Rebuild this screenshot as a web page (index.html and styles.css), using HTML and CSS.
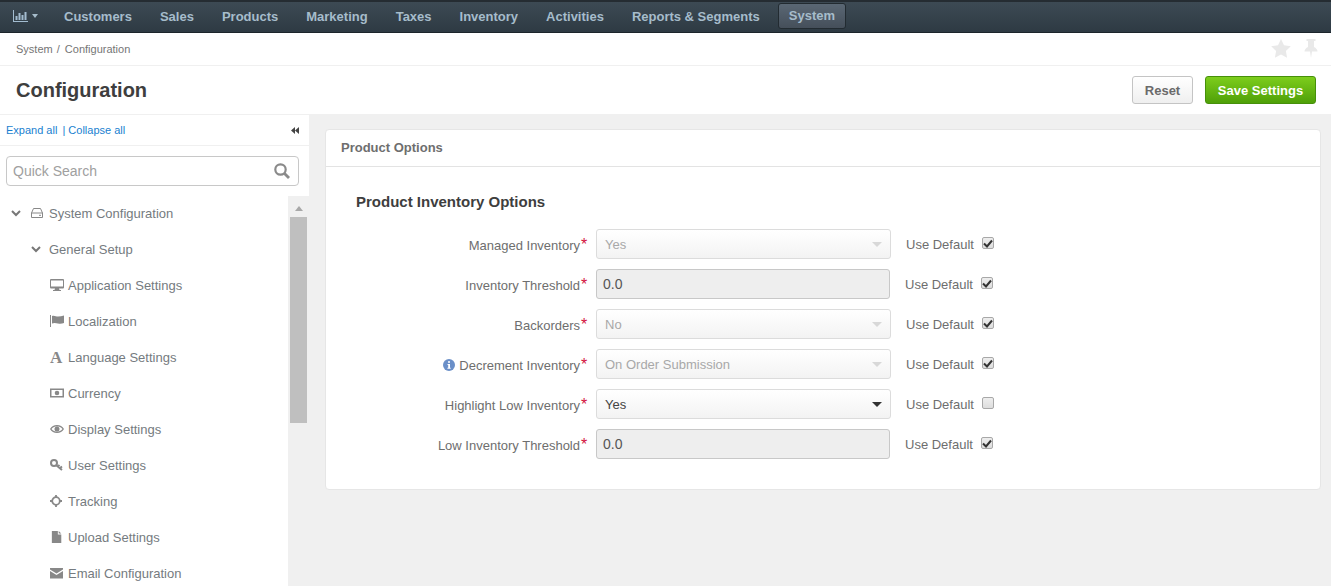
FILE: index.html
```html
<!DOCTYPE html>
<html>
<head>
    <meta charset="utf-8" />
    <title>Configuration</title>
    <link rel="stylesheet" href="styles.css">
</head>
<body>

<div class="topnav">
    <span class="nav-chart">
        <svg width="15" height="12" viewBox="0 0 15 12"><path d="M0 0h1v11h14v1H0z M2.500 6h2v4h-2z M5.500 3h2v7h-2z M8.500 5h2v5h-2z M11.500 2h2v8h-2z" fill="#a3bcd0"/></svg>
        <i class="nav-caret"></i>
    </span>
    <a>Customers</a>
    <a>Sales</a>
    <a>Products</a>
    <a>Marketing</a>
    <a>Taxes</a>
    <a>Inventory</a>
    <a>Activities</a>
    <a>Reports &amp; Segments</a>
    <a class="current">System</a>
</div>

<div class="crumbs">
    <span>System <span class="crumb-sep">/</span> Configuration</span>
    <span class="crumb-icons">
        <svg width="20" height="19" viewBox="0 0 20 19"><path d="M10 0l3 6.200 6.800 1-4.900 4.700 1.200 6.800L10 15.500l-6.100 3.200 1.200-6.800L.2 7.200l6.800-1z" fill="#e9e9e9"/></svg>
        <svg width="14" height="19" viewBox="0 0 14 19"><path d="M2.500 0h9v2H10v6c2 1 3.500 2.500 3.500 4.500H8L7 19l-1-6.500H.5C.5 10.500 2 9 4 8V2H2.500z" fill="#e9e9e9"/></svg>
    </span>
</div>

<div class="titlebar">
    <h1>Configuration</h1>
    <div class="actions">
        <button class="btn btn-reset">Reset</button>
        <button class="btn btn-save">Save Settings</button>
    </div>
</div>

<div class="layout">
    <div class="sidebar">
        <div class="expand">
            <span><a>Expand all</a> <span class="expand-sep">|</span> <a>Collapse all</a></span>
            <svg width="8" height="7" viewBox="0 0 8 7"><path d="M4 0v7L0 3.500z M8 0v7L4 3.500z" fill="#444"/></svg>
        </div>
        <div class="search-wrap">
            <div class="search">
                <span>Quick Search</span>
                <svg width="16" height="16" viewBox="0 0 16 16"><circle cx="6.500" cy="6.500" r="5.200" fill="none" stroke="#8a8a8a" stroke-width="2.200"/><path d="M10.500 10.500L15 15" stroke="#8a8a8a" stroke-width="2.800"/></svg>
            </div>
        </div>
        <div class="tree-wrap">
            <div class="tree">
                <div class="node lvl0">
                    <svg class="chev" width="10" height="7" viewBox="0 0 10 7"><path d="M1 1l4 4 4-4" fill="none" stroke="#777" stroke-width="2"/></svg>
                    <svg class="hdd" width="12" height="10" viewBox="0 0 12 10"><path d="M2.500.5h7L11.500 5v4.500H.5V5zM.5 5h11M8 7.300h2" fill="none" stroke="#888" stroke-width="1"/></svg>
                    System Configuration
                </div>
                <div class="node lvl1">
                    <svg class="chev" width="10" height="7" viewBox="0 0 10 7"><path d="M1 1l4 4 4-4" fill="none" stroke="#777" stroke-width="2"/></svg>
                    General Setup
                </div>
                <div class="node lvl2">
                    <svg class="ico" width="14" height="12" viewBox="0 0 14 12"><path d="M1 0h12a1 1 0 0 1 1 1v7.500a1 1 0 0 1-1 1H9l.5 1.500H11v1H3v-1h1.500L5 9.500H1a1 1 0 0 1-1-1V1a1 1 0 0 1 1-1zm0 1.500v6h12v-6z" fill="#888" fill-rule="evenodd"/></svg>
                    Application Settings
                </div>
                <div class="node lvl2">
                    <svg class="ico" width="14" height="12" viewBox="0 0 14 12"><path d="M0 0h1v12H0z M2 1c2-1 4 .5 6 .5S12 1 14 .5V8c-2 .8-4 1-6 .5S4 7.500 2 8.500z" fill="#888"/></svg>
                    Localization
                </div>
                <div class="node lvl2">
                    <span class="ico ico-a">A</span>
                    Language Settings
                </div>
                <div class="node lvl2">
                    <svg class="ico" width="14" height="12" viewBox="0 0 14 12"><path d="M0 1.500h14v9H0zm1.500 1.500v6h11V3zM7 3.700a2.300 2.300 0 1 1 0 4.600 2.300 2.300 0 0 1 0-4.600z" fill="#888" fill-rule="evenodd"/></svg>
                    Currency
                </div>
                <div class="node lvl2">
                    <svg class="ico" width="14" height="12" viewBox="0 0 14 12"><path d="M0 6c1.500-2.500 4-4 7-4s5.500 1.500 7 4c-1.500 2.500-4 4-7 4S1.500 8.500 0 6zm1.500 0C3 7.800 5 8.800 7 8.800S11 7.800 12.500 6C11 4.200 9 3.200 7 3.200S3 4.200 1.500 6zM7 3.500a2.500 2.500 0 1 1 0 5 2.500 2.500 0 0 1 0-5z" fill="#888"/></svg>
                    Display Settings
                </div>
                <div class="node lvl2">
                    <svg class="ico" width="14" height="12" viewBox="0 0 14 12"><circle cx="4" cy="4" r="3" fill="none" stroke="#888" stroke-width="2"/><path d="M6 6l6 5M10 9l2-1.500M8 7.500l1.500-1.500" stroke="#888" stroke-width="2" fill="none"/></svg>
                    User Settings
                </div>
                <div class="node lvl2">
                    <svg class="ico" width="14" height="12" viewBox="0 0 14 12"><circle cx="6" cy="6" r="3.800" fill="none" stroke="#888" stroke-width="1.800"/><path d="M6 0v3M6 9v3M0 6h3M9 6h3" stroke="#888" stroke-width="1.800"/></svg>
                    Tracking
                </div>
                <div class="node lvl2">
                    <svg class="ico" width="14" height="12" viewBox="0 0 12 14"><path d="M0 0h7v4h4v10H0z M8 0l3 3H8z" fill="#888"/></svg>
                    Upload Settings
                </div>
                <div class="node lvl2">
                    <svg class="ico" width="14" height="12" viewBox="0 0 14 12"><path d="M0 1h13v1.500L6.500 6.500 0 2.500z M0 4l6.500 4L13 4v7.500H0z" fill="#888"/></svg>
                    Email Configuration
                </div>
            </div>
            <div class="scrollbar">
                <i class="scroll-up"></i>
                <div class="thumb"></div>
            </div>
        </div>
    </div>

    <div class="main">
        <div class="panel">
            <div class="panel-head">Product Options</div>
            <div class="panel-body">
                <h2>Product Inventory Options</h2>

                <div class="row">
                    <label>Managed Inventory<b>*</b></label>
                    <div class="select off">Yes<i></i></div>
                    <span class="usedef">Use Default</span>
                    <span class="check"><svg width="10" height="9" viewBox="0 0 10 9"><path d="M1 4.500l3 3 5-6" fill="none" stroke="#333" stroke-width="2"/></svg></span>
                </div>
                <div class="row">
                    <label>Inventory Threshold<b>*</b></label>
                    <div class="input">0.0</div>
                    <span class="usedef">Use Default</span>
                    <span class="check"><svg width="10" height="9" viewBox="0 0 10 9"><path d="M1 4.500l3 3 5-6" fill="none" stroke="#333" stroke-width="2"/></svg></span>
                </div>
                <div class="row">
                    <label>Backorders<b>*</b></label>
                    <div class="select off">No<i></i></div>
                    <span class="usedef">Use Default</span>
                    <span class="check"><svg width="10" height="9" viewBox="0 0 10 9"><path d="M1 4.500l3 3 5-6" fill="none" stroke="#333" stroke-width="2"/></svg></span>
                </div>
                <div class="row">
                    <label>
                        <svg class="info" width="12" height="12" viewBox="0 0 12 12"><circle cx="6" cy="6" r="6" fill="#6a8fc8"/><path d="M5 2.200h2v1.600H5z M4.500 5h2.500v3.700h.7v1H4.400v-1h.8V6h-.7z" fill="#fff"/></svg>
                        Decrement Inventory<b>*</b>
                    </label>
                    <div class="select off">On Order Submission<i></i></div>
                    <span class="usedef">Use Default</span>
                    <span class="check"><svg width="10" height="9" viewBox="0 0 10 9"><path d="M1 4.500l3 3 5-6" fill="none" stroke="#333" stroke-width="2"/></svg></span>
                </div>
                <div class="row">
                    <label>Highlight Low Inventory<b>*</b></label>
                    <div class="select">Yes<i></i></div>
                    <span class="usedef">Use Default</span>
                    <span class="check"></span>
                </div>
                <div class="row">
                    <label>Low Inventory Threshold<b>*</b></label>
                    <div class="input">0.0</div>
                    <span class="usedef">Use Default</span>
                    <span class="check"><svg width="10" height="9" viewBox="0 0 10 9"><path d="M1 4.500l3 3 5-6" fill="none" stroke="#333" stroke-width="2"/></svg></span>
                </div>
            </div>
        </div>
    </div>
</div>

</body>
</html>
```

FILE: styles.css
```css
* { padding: 0; margin: 0; box-sizing: border-box; }

html, body { height: 100%; overflow: hidden; }
body { background: #fff; font-family: "Liberation Sans", Arial, sans-serif; font-size: 13px; color: #666; display: flex; flex-direction: column; }

/* top bar */
.topnav { height: 33px; flex: none; display: flex; align-items: center; gap: 28px; padding: 0 0 2px 13px; background: linear-gradient(#3d4a54, #2e3a43); border-top: 2px solid #252c32; border-bottom: 1px solid #1c252b; }
.topnav a { font-size: 13px; font-weight: bold; color: #a6bccb; }
.nav-chart { display: flex; align-items: center; gap: 4px; margin-right: -2px; }
.nav-caret { width: 0; height: 0; border: 3.5px solid transparent; border-top: 4px solid #a6bccb; border-bottom: 0; }
.topnav a.current { padding: 0 10px; height: 26px; line-height: 24px; margin-left: -10px; border: 1px solid #222b31; border-radius: 3px; background: linear-gradient(#5a6774, #454f5a); }

/* breadcrumb */
.crumbs { height: 33px; flex: none; display: flex; align-items: center; justify-content: space-between; padding: 0 13px 0 16px; font-size: 11px; color: #757575; border-bottom: 1px solid #f0f0f0; }
.crumb-sep { margin: 0 2px 0 1px; }
.crumb-icons { display: flex; align-items: center; gap: 13px; padding-bottom: 2px; }

/* title */
.titlebar { height: 48px; flex: none; display: flex; align-items: center; justify-content: space-between; padding: 0 15px 0 16px; }
h1 { font-size: 20px; color: #3e3e3e; }
.actions { display: flex; gap: 12px; }
.btn { height: 28px; border-radius: 3px; font-family: inherit; font-size: 13px; font-weight: bold; }
.btn-reset { width: 61px; color: #6a6a6a; background: linear-gradient(#fff, #efefef); border: 1px solid #c4c4c4; }
.btn-save { width: 111px; color: #fff; background: linear-gradient(#7dcd1c, #4fa008); border: 1px solid #46900a; }

/* page body */
.layout { flex: 1; display: flex; min-height: 0; background: #f0f0f0; border-top: 1px solid #f0f0f0; }

.sidebar { width: 309px; flex: none; display: flex; flex-direction: column; }
.expand { height: 31px; flex: none; display: flex; align-items: center; justify-content: space-between; padding: 0 10px 0 6px; background: #fff; border-bottom: 1px solid #f0f0f0; font-size: 11px; color: #1a7fd0; }
.expand-sep { margin-left: 2px; }
.search-wrap { height: 50px; flex: none; padding: 10px 10px 0 6px; background: #fff; }
.search { height: 30px; display: flex; align-items: center; justify-content: space-between; padding: 0 8px 0 6px; border: 1px solid #c8c8c8; border-radius: 4px; font-size: 14px; color: #a0a0a0; }

.tree-wrap { flex: 1; display: flex; min-height: 0; }
.tree { width: 288px; flex: none; background: #fff; overflow: hidden; }
.node { height: 36px; padding-bottom: 2px; display: flex; align-items: center; color: #757b80; white-space: nowrap; }
.lvl0 { padding-left: 11px; }
.lvl1 { padding-left: 31px; }
.lvl2 { padding-left: 50px; }
.chev { margin-right: 8px; }
.hdd { margin-right: 6px; margin-left: 2px; }
.ico { margin-right: 4px; flex: none; }
.ico-a { width: 14px; font-family: "Liberation Serif", serif; font-size: 17px; font-weight: bold; line-height: 1; color: #888; }

.scrollbar { width: 21px; flex: none; padding: 10px 2px 0; }
.scroll-up { display: block; width: 0; height: 0; margin: 0 auto 6px; border: 4px solid transparent; border-bottom: 5px solid #a8a8a8; border-top: 0; }
.thumb { height: 206px; background: #bfbfbf; }

/* main panel */
.main { flex: 1; padding: 14px 10px 0 16px; }
.panel { height: 361px; background: #fff; border: 1px solid #e6e6e6; border-radius: 4px; }
.panel-head { height: 37px; line-height: 35px; padding-left: 15px; font-weight: bold; color: #6e6e6e; border-bottom: 1px solid #e3e3e3; }
.panel-body { padding: 25px 0 0 30px; }
h2 { height: 20px; font-size: 15px; line-height: 20px; color: #3e3e3e; margin-bottom: 17px; }

.row { height: 30px; margin-bottom: 10px; display: flex; align-items: center; margin-left: -30px; }
.row label { width: 263px; flex: none; padding-top: 2px; white-space: nowrap; color: #6e6e6e; display: flex; justify-content: flex-end; align-items: center; }
.row label b { width: 9px; font-weight: normal; line-height: 1; color: #d3123d; font-size: 16px; margin-left: 1px; margin-right: -1px; }
.info { margin-right: 4px; }
.select, .input { width: 295px; height: 30px; margin-left: 7px; flex: none; display: flex; align-items: center; justify-content: space-between; padding: 0 8px; border: 1px solid #dcdcdc; border-radius: 3px; font-size: 13px; color: #444; background: linear-gradient(#fff, #f3f3f3); }
.select i { width: 0; height: 0; border: 5px solid transparent; border-top: 5px solid #333; border-bottom: 0; }
.select.off { color: #a8a8a8; }
.select.off i { border-top-color: #d8d8d8; }
.input { width: 294px; padding: 0 6px; font-size: 14px; background: #eeeeee; border-color: #c8c8c8; color: #555; }
.usedef { margin-left: 15px; width: 76px; flex: none; color: #6e6e6e; }
.check { width: 12px; height: 12px; margin-bottom: 2px; flex: none; display: flex; align-items: center; justify-content: center; border: 1px solid #a8a8a8; border-radius: 2px; background: linear-gradient(#eee, #ddd); }
```
